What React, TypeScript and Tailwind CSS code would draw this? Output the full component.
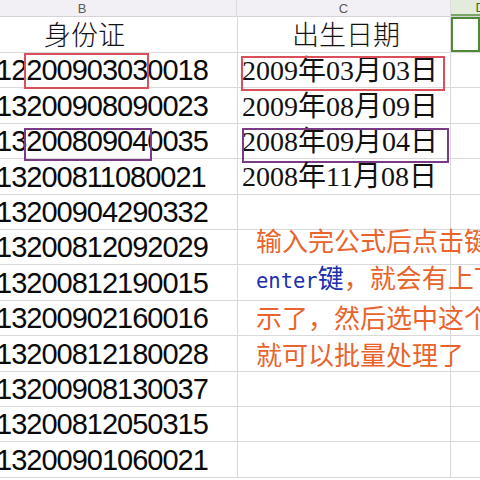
import React from "react";

const ids = [
  "13200908090023",
  "13200809040035",
  "13200811080021",
  "13200904290332",
  "13200812092029",
  "13200812190015",
  "13200902160016",
  "13200812180028",
  "13200908130037",
  "13200812050315",
  "13200901060021",
];

const dates = ["2009年08月09日", "2008年09月04日", "2008年11月08日"];

const numFont = { fontFamily: '"Liberation Sans", Arial, sans-serif' };

export default function App() {
  const rows: { id: string; date?: string; idBox?: string; dateBox?: string }[] = [
    { id: "12200903030018", date: "2009年03月03日", idBox: "red", dateBox: "red" },
    { id: ids[0], date: dates[0] },
    { id: ids[1], date: dates[1], idBox: "purple", dateBox: "purple" },
    { id: ids[2], date: dates[2] },
    ...ids.slice(3).map((id) => ({ id })),
  ];
  return (
    <div className="relative w-[480px] h-[480px] overflow-hidden bg-white">
      {/* header row */}
      <div className="flex h-[17px] bg-[#f2f0f4] border-b border-[#d6d4d8] text-[13px] text-[#5a5a5a]" style={numFont}>
        <div className="w-[237px] shrink-0 border-r border-[#dcdadf] flex items-center justify-center pr-[72px] leading-none">B</div>
        <div className="w-[214px] shrink-0 border-r border-[#dcdadf] flex items-center justify-center leading-none">C</div>
        <div className="flex-1 bg-[#e3ecdc] border-b-2 border-[#7aa565] flex items-center justify-end text-[#3d6b2a] leading-none">
          <span className="-mr-[5px]">D</span>
        </div>
      </div>
      {/* title row */}
      <div className="flex h-[36px] border-b border-[#d9d9d9]">
        <div
          className="w-[238px] shrink-0 border-r border-[#d9d9d9] flex items-center justify-center pr-[68px] text-[27px] text-[#111]"
          style={{ fontFamily: '"Noto Sans CJK SC", sans-serif', fontWeight: 300 }}
        >
          身份证
        </div>
        <div
          className="w-[213px] shrink-0 border-r border-[#d9d9d9] flex items-center justify-center text-[27px] text-[#111] pl-[4px]"
          style={{ fontFamily: '"Noto Sans CJK SC", sans-serif', fontWeight: 300 }}
        >
          出生日期
        </div>
        <div className="flex-1 border-2 border-[#4f8a36]" />
      </div>
      {rows.map((r, i) => (
        <div key={i} className="flex h-[35.4px] border-b border-[#d9d9d9]">
          <div className="relative w-[238px] shrink-0 border-r border-[#d9d9d9] flex items-center pt-[2px] text-[29px] text-[#0a0a0a]" style={numFont}>
            <span className="-ml-[4px] tracking-[-1px] whitespace-nowrap">{r.id}</span>
            {r.idBox === "red" && (
              <div className="absolute left-[24px] top-0 w-[125px] h-[36px] border-2 border-[#d9505a]" />
            )}
            {r.idBox === "purple" && (
              <div className="absolute left-[24px] top-[4px] w-[128px] h-[33px] border-2 border-[#7a3a86]" />
            )}
          </div>
          <div
            className="relative w-[213px] shrink-0 border-r border-[#d9d9d9] flex items-center pl-[4px] pt-[2px] text-[28px] text-[#111]"
            style={{ fontFamily: '"Liberation Serif", "Noto Sans CJK SC", serif' }}
          >
            {r.date && <span className="whitespace-nowrap">{r.date}</span>}
            {r.dateBox === "red" && (
              <div className="absolute left-[3px] top-[3px] w-[204px] h-[35px] border-2 border-[#d9505a]" />
            )}
            {r.dateBox === "purple" && (
              <div className="absolute left-[4px] top-[4px] w-[207px] h-[35px] border-2 border-[#7a3a86]" />
            )}
          </div>
          <div className="flex-1" />
        </div>
      ))}
      {/* annotation text */}
      <div
        className="absolute left-[256px] top-[222px] w-[260px] text-[26px] leading-[36.5px] text-[#e8642c] whitespace-nowrap"
        style={{ fontFamily: '"Noto Sans CJK SC", sans-serif' }}
      >
        <div>输入完公式后点击键</div>
        <div>
          <span className="text-[#1b2fae] text-[20.5px]" style={{ fontFamily: '"DejaVu Sans Mono", monospace' }}>enter</span>
          <span className="text-[#1b2fae]">键</span>，就会有上下
        </div>
        <div>示了，然后选中这个</div>
        <div>就可以批量处理了</div>
      </div>
    </div>
  );
}
